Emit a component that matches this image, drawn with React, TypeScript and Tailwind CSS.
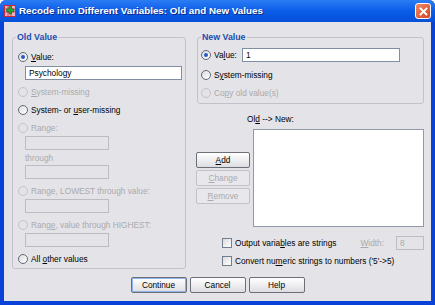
import React from 'react';

const font = { fontFamily: '"Liberation Sans", Arial, sans-serif' };

function Radio({ checked = false, disabled = false }: { checked?: boolean; disabled?: boolean }) {
  return (
    <span
      className={`flex h-[10px] w-[10px] shrink-0 items-center justify-center rounded-full border ${
        disabled ? 'border-[#c4c4c8] bg-[#e4e4e8]' : 'border-[#5f6b7a] bg-gradient-to-br from-[#dcdce0] to-white'
      }`}
    >
      {checked && <span className="h-[4px] w-[4px] rounded-full bg-[#2a5ac4]" />}
    </span>
  );
}

function Check() {
  return <span className="h-[10px] w-[10px] shrink-0 border border-[#6f7f90] bg-gradient-to-br from-[#dcdce0] to-white" />;
}

function RadioRow({
  label,
  checked,
  disabled,
  className = '',
}: {
  label: React.ReactNode;
  checked?: boolean;
  disabled?: boolean;
  className?: string;
}) {
  return (
    <div className={`flex h-[14px] items-center gap-[3px] ${disabled ? 'text-[#a9a9ae]' : 'text-black'} ${className}`}>
      <Radio checked={checked} disabled={disabled} />
      <span className="whitespace-nowrap">{label}</span>
    </div>
  );
}

function Box({ value = '', disabled = false, className = '' }: { value?: string; disabled?: boolean; className?: string }) {
  return (
    <div
      className={`flex h-[14px] items-center border px-[3px] ${
        disabled ? 'border-[#bcbcc2] bg-[#e4e4e8] text-[#a9a9ae]' : 'border-[#7f8ea0] bg-white text-black'
      } ${className}`}
    >
      {value}
    </div>
  );
}

function Btn({
  children,
  disabled = false,
  primary = false,
  className = '',
}: {
  children: React.ReactNode;
  disabled?: boolean;
  primary?: boolean;
  className?: string;
}) {
  return (
    <div
      className={`flex h-[16px] items-center justify-center rounded-[2px] border ${
        disabled
          ? 'border-[#c2c2c8] bg-[#e8e8ec] text-[#a9a9ae]'
          : 'border-[#6a6f78] bg-gradient-to-b from-white to-[#dedee2] text-black'
      } ${primary ? 'shadow-[inset_0_0_0_1px_#8fb2ea]' : ''} ${className}`}
    >
      {children}
    </div>
  );
}

function Group({ title, className = '', children }: { title: string; className?: string; children: React.ReactNode }) {
  return (
    <div className={`relative rounded-[3px] border border-[#c2c2ca] ${className}`}>
      <span className="absolute -top-[7px] left-[3px] bg-[#e4e4e8] px-[1px] text-[8.8px] font-bold leading-[12px] text-[#1d4cae]">
        {title}
      </span>
      {children}
    </div>
  );
}

const U = ({ children }: { children: React.ReactNode }) => <span className="underline underline-offset-1">{children}</span>;

export default function App() {
  return (
    <div className="flex h-[305px] w-[435px] flex-col overflow-hidden rounded-t-[6px] bg-[#0842d6]" style={font}>
      {/* title bar */}
      <div className="flex h-[22px] shrink-0 items-center bg-gradient-to-b from-[#2b7cf4] via-[#0a5ce8] to-[#0650d8] pl-[4px] pr-[4px]">
        <svg width="12" height="12" viewBox="0 0 12 12" className="shrink-0">
          <rect x="0" y="0" width="12" height="12" fill="#c8283c" />
          <rect x="1" y="1" width="10" height="10" fill="#f0b0c0" />
          <path d="M1 4h10M1 7h10M4 1v10M7 1v10" stroke="#c8283c" strokeWidth="0.8" />
          <path d="M5 1.5h2.5v2.5H10v2.5H7.5V9H5V6.5H2.5V4H5z" fill="#18b02c" stroke="#0a5a12" strokeWidth="0.5" />
        </svg>
        <span className="ml-[3px] whitespace-nowrap text-[9.8px] font-bold text-white [text-shadow:1px_1px_0_#0a2a8a]">
          Recode into Different Variables: Old and New Values
        </span>
        <div className="ml-auto flex h-[16px] w-[16px] items-center justify-center rounded-[3px] border border-white bg-gradient-to-br from-[#f08a64] to-[#d2401c]">
          <svg width="9" height="9" viewBox="0 0 9 9">
            <path d="M1.5 1.5l6 6M7.5 1.5l-6 6" stroke="white" strokeWidth="1.8" strokeLinecap="square" />
          </svg>
        </div>
      </div>

      {/* body */}
      <div className="mx-[4px] mb-[4px] flex flex-1 flex-col bg-[#e4e4e8] pl-[8px] pt-[15px] text-[8.3px] leading-[10px]">
        <div className="flex">
          {/* left column */}
          <Group title="Old Value" className="h-[232px] w-[174px] shrink-0 pl-[5px] pr-[3px]">
            <RadioRow className="mt-[12px]" checked label={<><U>V</U>alue:</>} />
            <Box className="ml-[7px] mt-[2px] w-[157px]" value="Psychology" />
            <RadioRow className="mt-[5px]" disabled label={<><U>S</U>ystem-missing</>} />
            <RadioRow className="mt-[4px]" label={<>System- or <U>u</U>ser-missing</>} />
            <RadioRow className="mt-[4px]" disabled label={<>Ran<U>g</U>e:</>} />
            <Box className="ml-[7px] mt-[1px] w-[84px]" disabled />
            <div className="ml-[7px] mt-[1px] flex h-[14px] items-center text-[#a9a9ae]">through</div>
            <Box className="ml-[7px] w-[84px]" disabled />
            <RadioRow className="mt-[5px]" disabled label="Range, LOWEST through value:" />
            <Box className="ml-[7px] mt-[1px] w-[84px]" disabled />
            <RadioRow className="mt-[5px]" disabled label={<>Rang<U>e</U>, value through HIGHEST:</>} />
            <Box className="ml-[7px] mt-[1px] w-[84px]" disabled />
            <RadioRow className="mt-[5px]" label={<>All <U>o</U>ther values</>} />
          </Group>

          {/* right column */}
          <div className="ml-[10px] flex w-[228px] flex-col">
            <Group title="New Value" className="ml-[1px] h-[67px] pl-[3px]">
              <div className="mt-[10px] flex h-[14px] items-center">
                <RadioRow checked label={<>Va<U>l</U>ue:</>} />
                <Box className="ml-[5px] w-[158px]" value="1" />
              </div>
              <RadioRow className="mt-[6px]" label={<>S<U>y</U>stem-missing</>} />
              <RadioRow className="mt-[4px]" disabled label={<>Co<U>p</U>y old value(s)</>} />
            </Group>

            <div className="ml-[51px] mt-[9px] h-[12px] leading-[12px]">
              Ol<U>d</U> --&gt; New:
            </div>
            <div className="mt-[4px] flex items-center">
              <div className="flex w-[54px] flex-col gap-[2px]">
                <Btn>
                  <U>A</U>dd
                </Btn>
                <Btn disabled>
                  <U>C</U>hange
                </Btn>
                <Btn disabled>
                  <U>R</U>emove
                </Btn>
              </div>
              <div className="ml-[3px] h-[98px] flex-1 border border-[#8f9aa8] bg-white" />
            </div>

            <div className="ml-[26px] mt-[8px] flex h-[15px] items-center">
              <Check />
              <span className="ml-[3px] whitespace-nowrap">
                Output varia<U>b</U>les are strings
              </span>
              <span className="ml-auto text-[#a9a9ae]">
                <U>W</U>idth:
              </span>
              <Box className="ml-[12px] w-[28px]" disabled value="8" />
            </div>
            <div className="ml-[26px] mt-[4px] flex h-[14px] items-center">
              <Check />
              <span className="ml-[3px] whitespace-nowrap">
                Convert nu<U>m</U>eric strings to numbers ('5'-&gt;5)
              </span>
            </div>
          </div>
        </div>

        {/* bottom buttons */}
        <div className="mt-[8px] flex justify-center gap-[3px] pr-[8px]">
          <Btn primary className="w-[56px]">
            Continue
          </Btn>
          <Btn className="w-[56px]">Cancel</Btn>
          <Btn className="w-[56px]">Help</Btn>
        </div>
      </div>
    </div>
  );
}
